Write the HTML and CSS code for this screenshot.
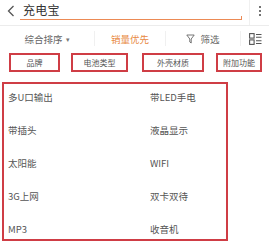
FILE: index.html
```html
<!DOCTYPE html>
<html lang="zh">
<head>
<meta charset="utf-8">
<link rel="stylesheet" href="styles.css">
</head>
<body>
<div class="page">
  <header class="top">
    <div class="back">
      <svg width="8" height="12" viewBox="0 0 8 12"><path d="M6.5 1 L1.5 6 L6.5 11" fill="none" stroke="#555" stroke-width="1.3"/></svg>
    </div>
    <div class="search">
      <span class="query">充电宝</span>
    </div>
    <div class="more">
      <span class="dot"></span><span class="dot"></span><span class="dot"></span>
    </div>
  </header>
  <nav class="sort">
    <div class="tab t1">综合排序 <span class="caret">▾</span></div>
    <div class="tab t2 active">销量优先</div>
    <div class="tab t3">
      <svg width="9" height="10" viewBox="0 0 9 10"><path d="M0.8 1 H8.2 L5.2 5 V9 L3.8 8 V5 Z" fill="none" stroke="#666" stroke-width="0.9"/></svg>
      <span>筛选</span>
    </div>
    <div class="tab t4">
      <svg width="13" height="12" viewBox="0 0 13 12"><rect x="0.6" y="0.6" width="4.5" height="4.5" fill="none" stroke="#555" stroke-width="1.1"/><rect x="0.6" y="6.9" width="4.5" height="4.5" fill="none" stroke="#555" stroke-width="1.1"/><path d="M7 1.5 H12.5 M7 4.2 H12.5 M7 7.8 H12.5 M7 10.5 H12.5" stroke="#555" stroke-width="1.1"/></svg>
    </div>
  </nav>
  <div class="filters">
    <div class="chip c1">品牌</div>
    <div class="chip c2">电池类型</div>
    <div class="chip c3">外壳材质</div>
    <div class="chip c4">附加功能</div>
  </div>
  <div class="features">
    <div class="item">多U口输出</div><div class="item">带LED手电</div>
    <div class="item">带插头</div><div class="item">液晶显示</div>
    <div class="item">太阳能</div><div class="item">WIFI</div>
    <div class="item">3G上网</div><div class="item">双卡双待</div>
    <div class="item">MP3</div><div class="item">收音机</div>
  </div>
</div>
</body>
</html>
```

FILE: styles.css
```css
* { box-sizing: border-box; }
html, body { margin: 0; padding: 0; background: #fff; }
body {
  font-family: "Noto Sans CJK SC", "Noto Sans", sans-serif;
  color: #555;
  width: 269px;
  height: 242px;
  overflow: hidden;
}
.page { width: 269px; }

.top {
  height: 26px;
  display: flex;
  align-items: stretch;
  border-bottom: 1px solid #ececec;
}
.back {
  width: 19px;
  display: flex;
  align-items: center;
  justify-content: center;
  padding-left: 2px;
  padding-bottom: 4px;
}
.search {
  width: 221px;
  margin-left: 1px;
  border-bottom: 1.5px solid #ec8a55;
  height: 20px;
  display: flex;
  align-items: center;
  padding-left: 3px;
  position: relative;
}
.search::after {
  content: "";
  position: absolute;
  right: -1px;
  bottom: -1px;
  width: 1.5px;
  height: 4px;
  background: #ec8a55;
}
.query {
  font-size: 12px;
  color: #333;
  letter-spacing: 0.3px;
}
.more {
  margin-left: 8px;
  border-left: 1px solid #f0f0f0;
  flex: 1;
  display: flex;
  flex-direction: column;
  align-items: center;
  justify-content: center;
  gap: 2px;
  padding-bottom: 4px;
}
.dot {
  width: 2px;
  height: 2px;
  background: #444;
  border-radius: 1px;
}

.sort {
  height: 25px;
  display: flex;
  align-items: center;
  font-size: 9.5px;
}
.tab {
  display: flex;
  align-items: center;
  justify-content: center;
  height: 15px;
  color: #666;
}
.t1 { width: 95px; border-right: 1px solid #f0f0f0; }
.t2 { width: 71px; border-right: 1px solid #f0f0f0; }
.t3 { width: 75px; border-right: 1px solid #f0f0f0; gap: 5px; }
.t4 { flex: 1; }
.active { color: #e8893f; }
.caret { font-size: 7px; margin-left: 3px; color: #777; }

.filters {
  display: flex;
  padding-top: 2px;
  height: 31px;
  font-size: 8px;
}
.chip {
  height: 19px;
  border: 2px solid #cf3d45;
  display: flex;
  align-items: center;
  justify-content: center;
  color: #555;
}
.c1 { margin-left: 9px; width: 51px; }
.c2 { margin-left: 11px; width: 57px; }
.c3 { margin-left: 14px; width: 62px; }
.c4 { margin-left: 12px; width: 46px; }

.features {
  margin-left: 2px;
  width: 226px;
  height: 159px;
  border: 2px solid #cf3d45;
  display: grid;
  grid-template-columns: 142px 1fr;
  grid-auto-rows: 33px;
  font-size: 9.5px;
}
.item {
  display: flex;
  align-items: center;
  padding-left: 4px;
  padding-bottom: 7px;
  color: #555;
}
```
